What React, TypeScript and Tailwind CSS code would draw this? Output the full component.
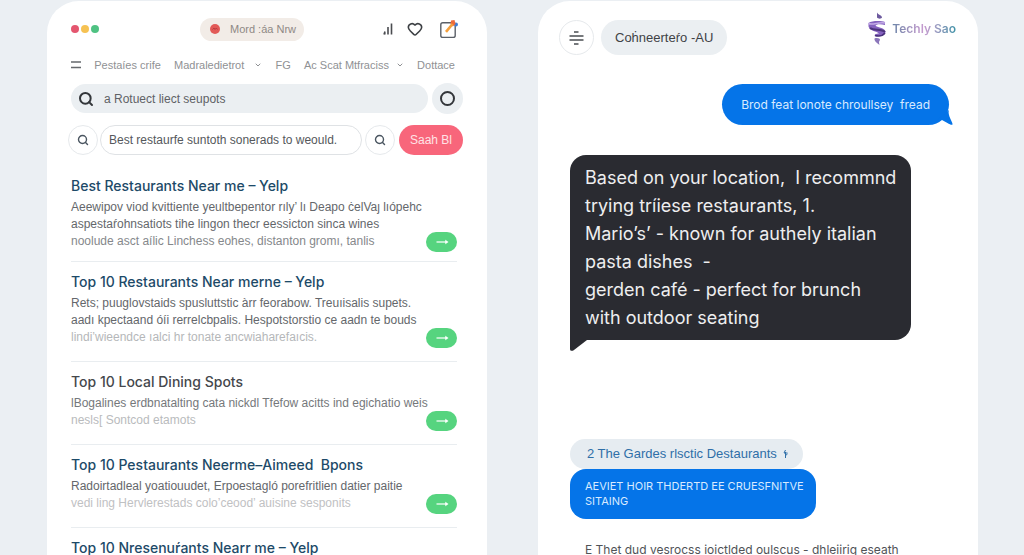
import { ChevronDown, Heart, Search } from "lucide-react";

type Line = { text: string; tone: string };
type Result = { title: string; titleTone: string; lines: Line[] };

const results: Result[] = [
  {
    title: "Best Restaurants Near me – Yelp",
    titleTone: "text-[#1d4a68]",
    lines: [
      { text: "Aeewipov viod kvittiente yeultbepentor rıly’ lı Deapo ċelVaȷ lıópehc", tone: "text-[#64676b]" },
      { text: "aspestaŕohnsatiots tihe lingon thecr eessicton sinca wines", tone: "text-[#64676b]" },
      { text: "noolude asct aílic Linchess eohes, distanton gromı, tanlis", tone: "text-[#85888b]" },
    ],
  },
  {
    title: "Top 10 Restaurants Near merne – Yelp",
    titleTone: "text-[#1d4a68]",
    lines: [
      { text: "Rets; puuglovstaids spusluttstic àrr feorabow. Treuıisalis supets.", tone: "text-[#64676b]" },
      { text: "aadı kpectaand óíi rerrelcbpalis. Hespotstorstio ce aadn te bouds", tone: "text-[#64676b]" },
      { text: "lindi’wieendce ıalci hr tonate ancwiaharefaıcis.", tone: "text-[#b5b7b9]" },
    ],
  },
  {
    title: "Top 10 Local Dining Spots",
    titleTone: "text-[#45484c]",
    lines: [
      { text: "lBogalines erdbnatalting cata nickdl Tfefow acitts ind egichatio weis", tone: "text-[#75787b]" },
      { text: "nesls[ Sontcod etamots", tone: "text-[#b9bbbd]" },
    ],
  },
  {
    title: "Top 10 Pestaurants Neerme–Aimeed  Bpons",
    titleTone: "text-[#1d4a68]",
    lines: [
      { text: "Radoirtadleal yoatiouudet, Erpoestagló porefritlien datier paitie", tone: "text-[#64676b]" },
      { text: "vedi ling Hervlerestads colo’ceood’ auisine sesponits", tone: "text-[#bfc1c3]" },
    ],
  },
  {
    title: "Top 10 Nresenuŕants Nearr me – Yelp",
    titleTone: "text-[#1d4a68]",
    lines: [],
  },
];

function ArrowIcon() {
  return (
    <svg width="13" height="6" viewBox="0 0 13 6" fill="none" stroke="white">
      <path d="M0.5 3H11" strokeWidth="1.2" />
      <path d="M9.5 1.2L12.2 3L9.5 4.8Z" fill="white" strokeWidth="0.5" />
    </svg>
  );
}

function ResultItem({ title, titleTone, lines }: Result) {
  return (
    <li className="border-b border-[#e9edf0] pt-[10px] pb-[13px] first:pb-[9px]">
      <h3 className="font-['Inter','Liberation_Sans',sans-serif]">
        <a href="#" className={`block text-[14px] leading-5 font-medium whitespace-pre ${titleTone}`}>
          {title}
        </a>
      </h3>
      {lines.length > 0 && (
        <div className="mt-[3px] flex items-end justify-between">
          <p className="w-[354px] pb-[2px] text-[12px] leading-[17px] whitespace-nowrap">
            {lines.map((line) => (
              <span key={line.text} className={`block ${line.tone}`}>
                {line.text}
              </span>
            ))}
          </p>
          <button
            aria-label={`Open ${title}`}
            className="flex h-5 w-[31px] shrink-0 items-center justify-center rounded-full bg-[#56d47f] pl-[2px]"
          >
            <ArrowIcon />
          </button>
        </div>
      )}
    </li>
  );
}

function SearchPanel() {
  return (
    <section className="rounded-t-[32px] bg-white px-6 pt-4">
      <header className="flex h-6 items-center">
        <div className="flex w-[129px] gap-[2px]">
          <span className="size-2 rounded-full bg-[#e4566f]" />
          <span className="size-2 rounded-full bg-[#f6c253]" />
          <span className="size-2 rounded-full bg-[#4fc282]" />
        </div>
        <button className="flex h-[23px] w-[104px] items-center gap-[10px] rounded-full bg-[#f2ece7] pl-[10px] text-[11px] whitespace-nowrap text-[#8f8985]">
          <svg width="10" height="10" viewBox="0 0 10 10">
            <circle cx="5" cy="5" r="5" fill="#e25a58" />
            <path d="M2.5 5.5L4 4L5 5.5L6.3 4L7.5 5.5" fill="none" stroke="#b93a40" strokeWidth="1" />
          </svg>
          Mord :áa Nrw
        </button>
        <div className="ml-auto flex items-center pr-1">
          <button aria-label="Stats">
            <svg width="11" height="12" viewBox="0 0 11 12" fill="none" stroke="#4a4c50" strokeWidth="1.6">
              <path d="M2 11.5L3 8.5M2.800 9.500V11.500M6 4V11.5M9.500 0.5V11.5" />
            </svg>
          </button>
          <button aria-label="Favourite" className="ml-[14px]">
            <Heart size={16} strokeWidth={2.4} color="#3d4044" />
          </button>
          <button aria-label="Compose" className="ml-4">
            <svg width="20" height="20" viewBox="0 0 20 20" fill="none">
              <rect x="1.8" y="3.8" width="14.4" height="14.6" rx="2" stroke="#5b6068" strokeWidth="1.4" />
              <circle cx="17" cy="5.5" r="2" fill="#3f7fd6" />
              <path d="M12 1.5L15.5 1L16.5 5L13.8 7.5L11.5 5Z" fill="#ee6b3c" />
              <path d="M13.5 5L7 12.8" stroke="#f5a03c" strokeWidth="2.6" />
            </svg>
          </button>
        </div>
      </header>

      <nav className="mt-4 mr-2 flex h-4 items-center justify-between text-[11px] whitespace-nowrap text-[#8f9194]">
        <button aria-label="Menu">
          <svg width="10" height="8" viewBox="0 0 10 8" stroke="#66696d" strokeWidth="1.5">
            <path d="M0 1H10M0 6.5H10" />
          </svg>
        </button>
        <a href="#">Pestaíes crife</a>
        <button className="flex items-center gap-[10px]">
          Madraledietrot
          <ChevronDown size={8} strokeWidth={3} />
        </button>
        <a href="#">FG</a>
        <button className="flex items-center gap-[7px]">
          Ac Scat Mtfraciss
          <ChevronDown size={8} strokeWidth={3} />
        </button>
        <a href="#">Dottace</a>
      </nav>

      <div className="mt-[10px] flex items-center gap-1">
        <label className="flex h-[29px] min-w-0 flex-1 items-center gap-[10px] rounded-full bg-[#ebeff2] pl-[7px]">
          <Search size={16} strokeWidth={3} color="#33363a" />
          <input
            aria-label="Search"
            defaultValue="a Rotuect liect seupots"
            className="min-w-0 flex-1 bg-transparent text-[12px] text-[#5f6266] outline-none"
          />
        </label>
        <button aria-label="Record" className="flex size-[31px] items-center justify-center rounded-full bg-[#ebeff2]">
          <span className="size-[15px] rounded-full border-2 border-[#33363a]" />
        </button>
      </div>

      <form className="-ml-[3px] mt-[11px] flex items-center">
        <button type="button" aria-label="Find" className="flex size-[30px] items-center justify-center rounded-full border border-[#e6e9ec]">
          <Search size={12} strokeWidth={2.8} color="#4a5560" />
        </button>
        <input
          aria-label="Query"
          defaultValue="Best restaurfe suntoth sonerads to weould."
          className="ml-[2px] h-[30px] min-w-0 flex-1 rounded-full border border-[#dfe2e5] pl-2 text-[12px] text-[#55585c] outline-none"
        />
        <button type="button" aria-label="Find nearby" className="ml-[3px] flex size-[30px] items-center justify-center rounded-full border border-[#e6e9ec]">
          <Search size={12} strokeWidth={2.8} color="#4a5560" />
        </button>
        <button type="button" className="ml-1 h-[30px] w-16 rounded-full bg-[#f8667b] text-[12px] whitespace-nowrap text-[#ffe3e6]">
          Saah Bl
        </button>
      </form>

      <ul className="mt-[11px] mr-[6px]">
        {results.map((result) => (
          <ResultItem key={result.title} {...result} />
        ))}
      </ul>
    </section>
  );
}

function Logo() {
  return (
    <a href="#" className="flex items-center gap-[5px]">
      <svg width="20" height="34" viewBox="0 0 20 34" fill="none">
        <path d="M10 0.5C11 3 15 3 15 5.5C14.5 7 11 7 10 5.5Z" fill="#6d5a9e" />
        <path d="M1.5 11C5 8.5 14 8.5 18 10V13C14 12 10 12 8.5 13.5C10 16 17 15 18.5 19.5C18.5 23 14 25 8 24C7 22.5 9 21.5 12 21.5C10 19 3 19.5 1.5 14.5Z" fill="#8562bf" />
        <path d="M1.5 11.5C6 13.5 12 9.5 18 11" stroke="#c3abe6" strokeWidth="1.5" />
        <path d="M3 16C7 19 14 16.5 18 20" stroke="#4c347c" strokeWidth="2" />
        <path d="M8 23.5C12 24.5 16 23.5 18 21" stroke="#49307c" strokeWidth="1.5" />
        <path d="M7.5 26.5C10 25.5 13.5 26.5 13 28C11.5 29.5 12 31 12.5 33C10 31 7 29 7.5 26.5Z" fill="#8b76ba" />
      </svg>
      <span className="bg-linear-to-r from-[#6c86a8] via-[#c79bd0] to-[#3b93a8] bg-clip-text font-['Inter','Liberation_Sans',sans-serif] text-[12px] font-semibold whitespace-nowrap text-transparent">
        Techly Sao
      </span>
    </a>
  );
}

function ChatPanel() {
  return (
    <section className="flex flex-col items-start rounded-t-[32px] bg-white pt-[11px] pr-[22px] pl-[21px] font-['Inter','Liberation_Sans',sans-serif]">
      <header className="flex w-full items-start">
        <button aria-label="Menu" className="mt-2 flex size-[35px] items-center justify-center rounded-full border border-[#e6e9ec]">
          <svg width="15" height="14" viewBox="0 0 15 14" stroke="#4a4d51" strokeWidth="1.4">
            <path d="M5 1H9.5M0.5 5H14.5M0.5 9H14.5M5 13H9.5" />
          </svg>
        </button>
        <h2 className="mt-2 ml-[7px] flex h-[35px] items-center rounded-full bg-[#ebeff2] px-[14px] font-['Liberation_Sans',sans-serif] text-[13px] whitespace-nowrap text-[#3f4246]">
          Coḣneerteŕo -AU
        </h2>
        <div className="ml-auto">
          <Logo />
        </div>
      </header>

      <div className="relative mt-[29px] mr-[7px] self-end rounded-full bg-[#0574e8] px-[19px] text-[12px] leading-[41px] whitespace-nowrap text-[#d8eaff]">
        Brod feat lonote chroullsey&nbsp; fread
        <svg className="absolute -right-1 -bottom-px" width="18" height="16" viewBox="0 0 18 16">
          <path d="M14 0C12 5 18 12 17.5 14.5C16.5 16 11 12 7 10L0 12Z" fill="#0574e8" />
        </svg>
      </div>

      <div className="relative mt-[30px] ml-[11px] rounded-2xl rounded-bl-none bg-[#2a2b31] px-[15px] pt-[9px] pb-2 text-[18px] leading-7 whitespace-nowrap text-[#eeeeef]">
        <p>Based on your location,&nbsp; I recommnd</p>
        <p>trying tríiese restaurants, 1.</p>
        <p>Mario’s’ - known for authely italian</p>
        <p>pasta dishes&nbsp; -</p>
        <p>gerden café - perfect for brunch</p>
        <p>with outdoor seating</p>
        <svg className="absolute top-full left-0" width="17" height="11" viewBox="0 0 17 11">
          <path d="M0 0H17L4 10C2 11.5 0 11 0 9Z" fill="#2a2b31" />
        </svg>
      </div>

      <button className="mt-[99px] ml-[11px] flex h-[30px] items-center gap-[6px] rounded-full bg-[#e6ecf1] px-[15px] pl-[17px] font-['Liberation_Sans',sans-serif] text-[13px] whitespace-nowrap text-[#2f6fa8]">
        2 The Gardes rlsctic Destaurants
        <svg width="5" height="8" viewBox="0 0 5 8" fill="none" stroke="#2f6fa8">
          <path d="M2.5 0L1 3H4.5M2.5 2V8M2.5 5.5L4.5 4" />
        </svg>
      </button>
      <button className="ml-[11px] rounded-2xl bg-[#0574e8] px-[15px] py-[10px] pr-3 text-left text-[11px] leading-[15px] whitespace-nowrap text-[#d8eaff]">
        AEVIET HOIR THDERTD EE CRUESFNITVE
        <br />
        SITAING
      </button>
      <p className="mt-[22px] ml-[26px] text-[12px] leading-[18px] whitespace-nowrap text-[#505357]">
        E Thet dud vesrocss ioictlded oulscus - dhleiirig eseath
      </p>
    </section>
  );
}

export default function App() {
  return (
    <main className="grid h-screen grid-cols-2 gap-[51px] overflow-hidden bg-[#ebeff3] pt-px pr-[46px] pl-[47px] font-['Liberation_Sans',sans-serif]">
      <SearchPanel />
      <ChatPanel />
    </main>
  );
}
